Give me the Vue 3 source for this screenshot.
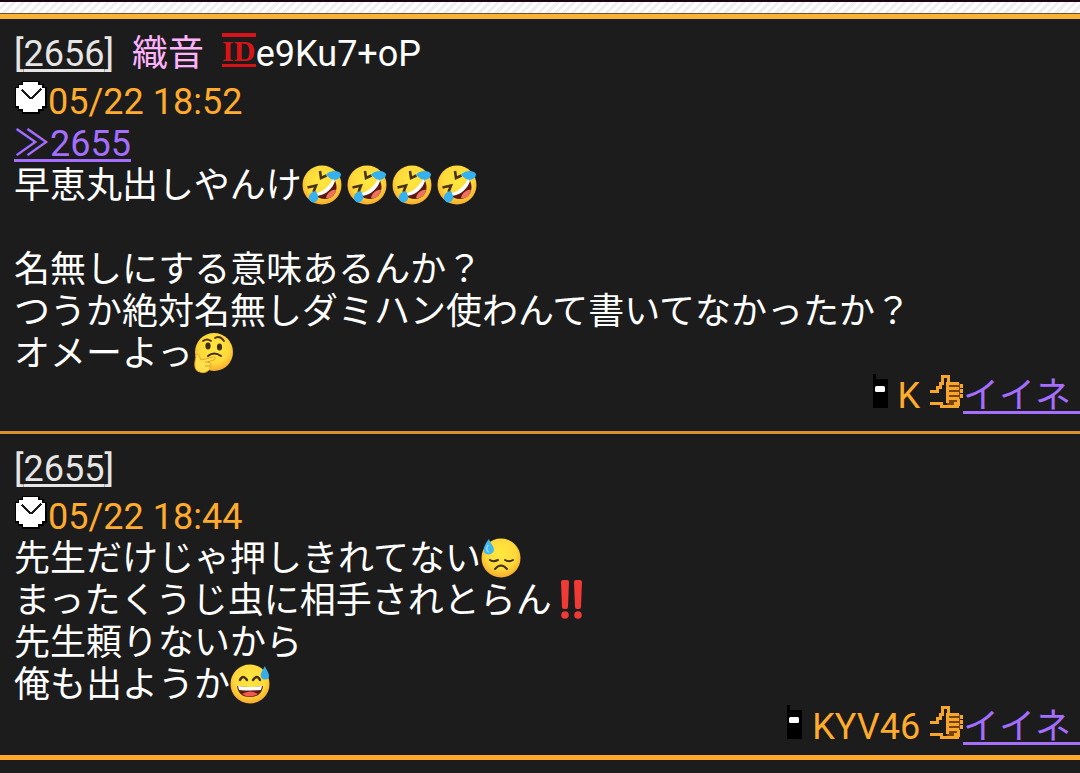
<template>
  <div class="board">
    <svg class="sprite" aria-hidden="true">
      <defs>
        <radialGradient id="face" cx="50%" cy="40%" r="60%">
          <stop offset="0" stop-color="#ffe83f" />
          <stop offset="0.65" stop-color="#ffd93a" />
          <stop offset="1" stop-color="#f8ab2c" />
        </radialGradient>

        <symbol id="rofl" viewBox="0 0 45 42">
          <circle cx="20" cy="20" r="19.5" fill="url(#face)" />
          <path d="M18 6L19 13L24.500 10.500M5.500 22.500L14 20.500L11.500 27" fill="none" stroke="#4a3215" stroke-width="2.600" />
          <path d="M13 30C22 28 29 22 32 14C36 20 35 27 31 31C26 35 18 35 13 30Z" fill="#5a1a12" />
          <path d="M24 33C25 28 30 24 34 25C33 30 29 34 24 33Z" fill="#f0705f" />
          <path d="M12 29C21 27 28 21 31 13L33 16C31 23 24 30 15 31Z" fill="#fff" />
          <path d="M24 10C27 5 37 5 39 9C39 14 33 16 29 14C27 13 26 11 24 10Z" fill="#35b2ee" />
          <path d="M14 26C10 26 6 30 7 34C9 39 14 38 16 34C17 31 15 29 14 26Z" fill="#35b2ee" />
        </symbol>

        <symbol id="thinking" viewBox="0 0 45 42">
          <circle cx="21" cy="19" r="19" fill="url(#face)" />
          <ellipse cx="15" cy="13" rx="2.600" ry="3.400" fill="#422b0d" />
          <ellipse cx="26.500" cy="14" rx="2.600" ry="3.600" fill="#422b0d" />
          <path d="M10 8Q14 5 18 8M22 5Q27 2 31 8" fill="none" stroke="#513414" stroke-width="1.800" stroke-linecap="round" />
          <path d="M15 23Q21 18 28 23" fill="none" stroke="#422b0d" stroke-width="2" stroke-linecap="round" />
          <path d="M3 24C2 21 5 20 6 23L8 27L20 24C23 23 23 27 20 27L15 29C19 30 18 32 17 33C18 38 11 41 7 39C1 38 1 31 3 24Z" fill="#ffe04a" stroke="#e8a72b" stroke-width="1" />
          <path d="M12 29L17 29M12 33L17 33" fill="none" stroke="#dc982a" stroke-width="1" />
        </symbol>

        <symbol id="sweat" viewBox="0 0 45 42">
          <circle cx="20" cy="20" r="19.500" fill="url(#face)" />
          <path d="M9 22Q12 24.500 17 22M24 22Q28 24.500 32 22" fill="none" stroke="#422b0d" stroke-width="2" stroke-linecap="round" />
          <path d="M14 31Q20 24 26 31" fill="none" stroke="#422b0d" stroke-width="2" stroke-linecap="round" />
          <path d="M8 1C4 6 2 10 3 14C5 18 12 17 13 12C13 8 9 5 8 1Z" fill="#43b8ef" />
          <path d="M7 7Q4 13 8 14" fill="none" stroke="#8bdcff" stroke-width="1.500" />
        </symbol>

        <symbol id="grin" viewBox="0 0 45 42">
          <circle cx="20" cy="20" r="19.500" fill="url(#face)" />
          <path d="M10 16Q13 10 17 16M23 16Q27 10 30 16" fill="none" stroke="#422b0d" stroke-width="2.400" stroke-linecap="round" />
          <path d="M7 22Q20 24 33 22C32 30 27 33 20 33C13 33 8 30 7 22Z" fill="#5a1a12" />
          <path d="M12 30Q20 25 28 30Q20 35 12 30Z" fill="#ef5b50" />
          <path d="M8 22Q20 24 32 22L31 26Q20 27 9 26Z" fill="#fff" />
          <path d="M35 2C32 7 30 10 31 13C33 17 39 16 39 12C39 8 36 6 35 2Z" fill="#35aeea" />
        </symbol>

        <symbol id="bangbang" viewBox="0 0 45 42">
          <path d="M9 2Q9 0 11 0H15Q17 0 17 2L16 27Q16 29 14 29H12Q10 29 10 27ZM22 2Q22 0 24 0H28Q30 0 30 2L29 27Q29 29 27 29H25Q23 29 23 27Z" fill="#f03a35" />
          <circle cx="13" cy="35" r="3.800" fill="#f03a35" />
          <circle cx="26" cy="35" r="3.800" fill="#f03a35" />
        </symbol>
      </defs>
    </svg>

    <div class="stripes"></div>

    <main>
      <article v-for="post in posts" :key="post.no" class="post">
        <header class="post-head">
          [<a href="#" class="post-no">{{ post.no }}</a>]
          <template v-if="post.name">
            <span class="name">&nbsp;{{ post.name }}&nbsp;</span>
            {{ ' ' }}<span class="id-mark">ID</span><span class="id">{{ post.id }}</span>
          </template>
        </header>

        <div class="date">
          <svg class="icon" viewBox="0 0 34 42" aria-hidden="true">
            <path d="M9 1H24V4H28V7H31V25H28V28H24V31H9V28H5V25H2V7H5V4H9Z" fill="#fff" stroke="#000" stroke-width="3" paint-order="stroke" />
            <path d="M8 9L11 12L16 17H18L22 13L27 8" fill="none" stroke="#1a1a1a" stroke-width="2.800" />
          </svg><time>{{ post.date }}</time>
        </div>

        <div v-if="post.reply"><a href="#" class="link">≫{{ post.reply }}</a></div>

        <p v-for="(line, i) in post.lines" :key="i" class="line">
          {{ line.text }}<svg
            v-for="(emoji, n) in line.emoji"
            :key="n"
            class="emoji"
            viewBox="0 0 45 42"
            role="img"
            :aria-label="emoji"
          ><use :href="'#' + emoji" /></svg>
        </p>

        <footer class="post-foot">
          <svg class="phone" viewBox="0 0 18 42" aria-hidden="true">
            <path d="M2 -1H5V4H17V33H2Z" fill="#000" />
            <rect x="4" y="11" width="10" height="6" rx="1.500" fill="#fff" />
          </svg>
          {{ post.device }}
          <svg class="icon" viewBox="0 0 34 42" aria-hidden="true">
            <path d="M18 8H31V31H18Z" fill="#7a430c" />
            <g fill="none" stroke="#f7a62c" stroke-width="3">
              <path d="M1 16H8V12H11V8H13V1H19V8H30M18 7V28M18 13H30M18 18H30M18 23H30" />
              <path d="M32 9V13M32 14V18M32 19V23" />
              <path d="M1 28H12V31H28V28H25M29 24V31" />
            </g>
          </svg><a href="#" class="link">イイネ&nbsp;</a>
        </footer>
      </article>
    </main>
  </div>
</template>

<script setup>
const posts = [
  {
    no: 2656,
    name: '織音',
    id: 'e9Ku7+oP',
    date: '05/22 18:52',
    reply: 2655,
    lines: [
      { text: '早恵丸出しやんけ', emoji: ['rofl', 'rofl', 'rofl', 'rofl'] },
      { text: '' },
      { text: '名無しにする意味あるんか？' },
      { text: 'つうか絶対名無しダミハン使わんて書いてなかったか？' },
      { text: 'オメーよっ', emoji: ['thinking'] }
    ],
    device: 'K'
  },
  {
    no: 2655,
    date: '05/22 18:44',
    lines: [
      { text: '先生だけじゃ押しきれてない', emoji: ['sweat'] },
      { text: 'まったくうじ虫に相手されとらん', emoji: ['bangbang'] },
      { text: '先生頼りないから' },
      { text: '俺も出ようか', emoji: ['grin'] }
    ],
    device: 'KYV46'
  }
]
</script>

<style>
body {
  background: #1c1c1c;
}
</style>

<style scoped>
.board {
  color: #fff;
  background: #1c1c1c;
  font-family: Roboto, "Noto Sans CJK JP", sans-serif;
  font-size: 36px;
  line-height: 42px;
}

.sprite {
  position: absolute;
  width: 0;
  height: 0;
}

.stripes {
  height: 11px;
  border-top: 2px solid #1b0416;
  border-bottom: 1px solid #6b5030;
  background: repeating-linear-gradient(135deg, #fff 0 3px, #efefef 3px 6px);
}

main {
  border-top: 5px solid #f9b233;
  border-bottom: 5px solid #ffa92b;
}

.post {
  padding: 14px 0 7px 14px;
}

.post:not(:last-child) {
  padding-bottom: 14px;
  border-bottom: 3px solid #d9932c;
}

.post-head {
  margin-bottom: 6px;
  color: #e6e6e6;
}

.post-no {
  color: #e6e6e6;
  text-decoration-thickness: 3px;
  text-underline-offset: 3px;
}

.name {
  color: #ffb3ff;
}

.id {
  color: #fff;
}

.id-mark {
  display: inline-block;
  box-sizing: border-box;
  width: 34px;
  height: 34px;
  border-top: 4px solid #d91418;
  border-bottom: 3px solid #d91418;
  color: #d91418;
  font-family: "Liberation Serif", serif;
  font-size: 30px;
  font-weight: bold;
  line-height: 27px;
  text-align: center;
  vertical-align: top;
}

.date,
.post-foot {
  color: #ffab2e;
}

.line {
  min-height: 42px;
  margin: 0;
}

.link {
  color: #a56eff;
  text-decoration-thickness: 3px;
  text-underline-offset: 3px;
}

.icon,
.phone,
.emoji {
  height: 42px;
  overflow: visible;
  vertical-align: top;
}

.icon {
  width: 34px;
  shape-rendering: crispEdges;
}

.phone {
  width: 18px;
}

.emoji {
  width: 45px;
}

.post-foot {
  text-align: right;
}
</style>
